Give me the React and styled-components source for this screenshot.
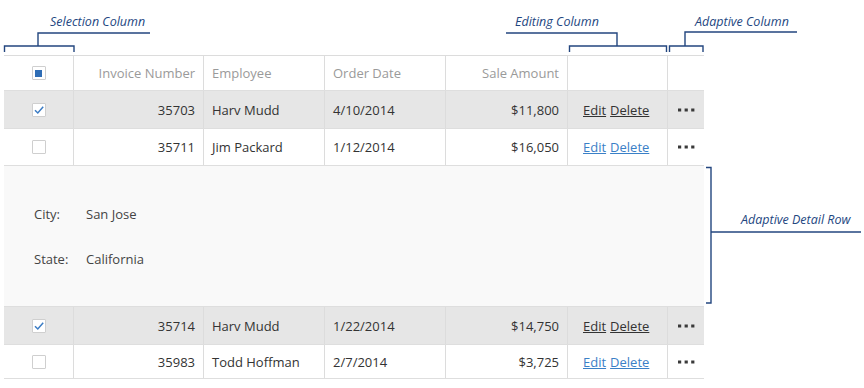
import React from 'react';
import styled, { createGlobalStyle } from 'styled-components';

const GlobalStyle = createGlobalStyle`
  html, body {
    margin: 0;
    padding: 0;
    background: #ffffff;
  }
  body {
    font-family: "Open Sans", "Noto Sans", sans-serif;
  }
`;

const cols = '70px 130px 121px 121px 122px 100px 36px';
const lineColor = '#23467f';

const rows = [
  { id: 35703, name: 'Harv Mudd', date: '4/10/2014', amount: '$11,800', selected: true, h: 38 },
  { id: 35711, name: 'Jim Packard', date: '1/12/2014', amount: '$16,050', selected: false, h: 37, detail: { city: 'San Jose', state: 'California' } },
  { id: 35714, name: 'Harv Mudd', date: '1/22/2014', amount: '$14,750', selected: true, h: 38 },
  { id: 35983, name: 'Todd Hoffman', date: '2/7/2014', amount: '$3,725', selected: false, h: 34 },
];

//Data grid with annotation callouts
export default function App() {
  return (
    <Page>
      <GlobalStyle />
      <Grid>
        <HeaderRow>
          <Cell center><CheckBox><Partial /></CheckBox></Cell>
          <HeadCell right>Invoice Number</HeadCell>
          <HeadCell>Employee</HeadCell>
          <HeadCell>Order Date</HeadCell>
          <HeadCell right>Sale Amount</HeadCell>
          <HeadCell />
          <HeadCell last />
        </HeaderRow>
        {rows.map(r => (
          <React.Fragment key={r.id}>
            <Row selected={r.selected} h={r.h}>
              <Cell center>
                <CheckBox>
                  {r.selected && (
                    <svg width="12" height="12" viewBox="0 0 12 12">
                      <path d="M2 6.2 L4.8 9 L10.2 2.8" fill="none" stroke="#3b7cc4" strokeWidth="1.5" />
                    </svg>
                  )}
                </CheckBox>
              </Cell>
              <Cell right>{r.id}</Cell>
              <Cell>{r.name}</Cell>
              <Cell>{r.date}</Cell>
              <Cell right>{r.amount}</Cell>
              <ActionCell>
                <ActionLink selected={r.selected}>Edit</ActionLink>
                <ActionLink selected={r.selected}>Delete</ActionLink>
              </ActionCell>
              <Cell last center>
                <svg width="17" height="4" viewBox="0 0 17 4">
                  <g fill="#3a3a3a">
                    <rect x="0" y="0.5" width="3.2" height="3" />
                    <rect x="6.6" y="0.5" width="3.2" height="3" />
                    <rect x="13.2" y="0.5" width="3.2" height="3" />
                  </g>
                </svg>
              </Cell>
            </Row>
            {r.detail && (
              <DetailRow>
                <DetailGrid>
                  <DetailLabel>City:</DetailLabel>
                  <span>{r.detail.city}</span>
                  <DetailLabel>State:</DetailLabel>
                  <span>{r.detail.state}</span>
                </DetailGrid>
              </DetailRow>
            )}
          </React.Fragment>
        ))}
      </Grid>

      <Callouts width="864" height="388" viewBox="0 0 864 388">
        <g fill="none" stroke={lineColor} strokeWidth="1.4">
          <path d="M150 33 H38 V46" />
          <path d="M4.5 52 V46 H74 V52" />
          <path d="M506 33 H617 V46" />
          <path d="M569.5 52 V46 H666.5 V52" />
          <path d="M797 32 H685 V46" />
          <path d="M669.5 52 V46 H703 V52" />
          <path d="M706 167.5 H711 V303 H706" />
          <path d="M711 232 H861" />
        </g>
      </Callouts>
      <CalloutText x={50} y={13}>Selection Column</CalloutText>
      <CalloutText x={515} y={13}>Editing Column</CalloutText>
      <CalloutText x={695} y={13}>Adaptive Column</CalloutText>
      <CalloutText x={741} y={211}>Adaptive Detail Row</CalloutText>
    </Page>
  );
}

const Page = styled.div`
  position: relative;
  width: 864px;
  height: 388px;
  padding: 55px 0 0 4px;
  box-sizing: border-box;
  overflow: hidden;
`;

const Grid = styled.div`
  width: 700px;
  border-top: 1px solid #dcdcdc;
  font-size: 13px;
  color: #333;
`;

const RowBase = styled.div`
  display: grid;
  grid-template-columns: ${cols};
  border-bottom: 1px solid #dedede;
  box-sizing: border-box;
`;

const HeaderRow = styled(RowBase)`
  height: 35px;
  color: #9a9a9a;
`;

const Row = styled(RowBase)`
  height: ${props => props.h}px;
  background: ${props => props.selected ? '#e6e6e6' : '#ffffff'};
`;

const Cell = styled.div`
  display: flex;
  align-items: center;
  justify-content: ${props => props.center ? 'center' : props.right ? 'flex-end' : 'flex-start'};
  padding: 0 8px;
  border-right: ${props => props.last ? 'none' : '1px solid #dcdcdc'};
  white-space: nowrap;
  overflow: hidden;
`;

const HeadCell = styled(Cell)``;

const ActionCell = styled(Cell)`
  padding-left: 15px;
  gap: 4px;
`;

const CheckBox = styled.div`
  width: 14px;
  height: 14px;
  box-sizing: border-box;
  border: 1px solid #cfcfcf;
  border-radius: 1px;
  background: #fff;
  display: flex;
  align-items: center;
  justify-content: center;
`;

const Partial = styled.div`
  width: 7px;
  height: 7px;
  background: #2f6db5;
`;

const ActionLink = styled.a`
  color: ${props => props.selected ? '#333' : '#3a80c7'};
  text-decoration: underline;
`;

const DetailRow = styled.div`
  height: 141px;
  box-sizing: border-box;
  background: #f9f9f9;
  border-bottom: 1px solid #dedede;
  display: flex;
  align-items: center;
  padding-left: 30px;
`;

const DetailGrid = styled.div`
  display: grid;
  grid-template-columns: 52px auto;
  row-gap: 27px;
  color: #444;
`;

const DetailLabel = styled.span`
  color: #444;
`;

const Callouts = styled.svg`
  position: absolute;
  left: 0;
  top: 0;
  pointer-events: none;
`;

const CalloutText = styled.div`
  position: absolute;
  left: ${props => props.x}px;
  top: ${props => props.y}px;
  font-style: italic;
  font-size: 12.5px;
  color: ${lineColor};
  white-space: nowrap;
`;
